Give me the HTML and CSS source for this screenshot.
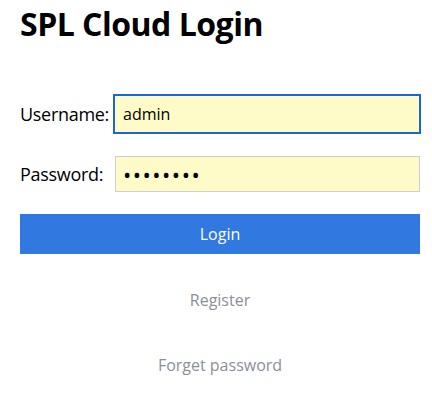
FILE: index.html
```html
<!doctype html>
<html>

<head>
	<link rel="stylesheet" href="styles.css">
</head>

<body>
	<div class="login">
		<h1>SPL Cloud Login</h1>
		<form name="login">
			<div class="row">
				<label>Username:</label>
				<input type="text" name="user" class="focused" value="admin">
			</div>
			<div class="row">
				<label>Password:</label>
				<input type="password" name="pass" value="12345678">
			</div>
			<button type="button" class="submit">Login</button>
			<a class="link" href="#">Register</a>
			<a class="link" href="#">Forget password</a>
		</form>
	</div>
</body>

</html>
```

FILE: styles.css
```css
body {
	margin: 0;
	background: #fff;
	font-family: "Open Sans", "Noto Sans", sans-serif;
	color: #000;
}

.login {
	width: 400px;
	padding: 0 20px;
}

h1 {
	margin: 0;
	font-size: 32px;
	line-height: 48px;
	font-weight: bold;
	letter-spacing: -0.5px;
}

form {
	margin-top: 48px;
	display: flex;
	flex-direction: column;
}

.row {
	display: flex;
	align-items: center;
	height: 36px;
	margin-bottom: 24px;
}

label {
	width: 95px;
	font-size: 18px;
	letter-spacing: -0.3px;
}

input {
	flex: 1;
	height: 36px;
	box-sizing: border-box;
	border: 1px solid #cfcfcf;
	background: #fffbc9;
	padding: 0 7px;
	font-family: "Open Sans", sans-serif;
	font-size: 16px;
	color: #000;
	outline: none;
}

input[type="password"] {
	font-size: 22px;
	letter-spacing: 1.5px;
}

input.focused {
	border: 2px solid #1a66d9;
	margin-left: -2px;
	margin-right: -1px;
	height: 40px;
	padding-left: 8px;
}

.submit {
	margin-top: -2px;
	height: 40px;
	border: none;
	background: #3178e0;
	color: #fff;
	font-family: "Open Sans", sans-serif;
	font-size: 16px;
	cursor: pointer;
}

.link {
	display: block;
	text-align: center;
	line-height: 65px;
	font-size: 16px;
	color: #8b9099;
	text-decoration: none;
}

.link:first-of-type {
	margin-top: 14px;
}
```
